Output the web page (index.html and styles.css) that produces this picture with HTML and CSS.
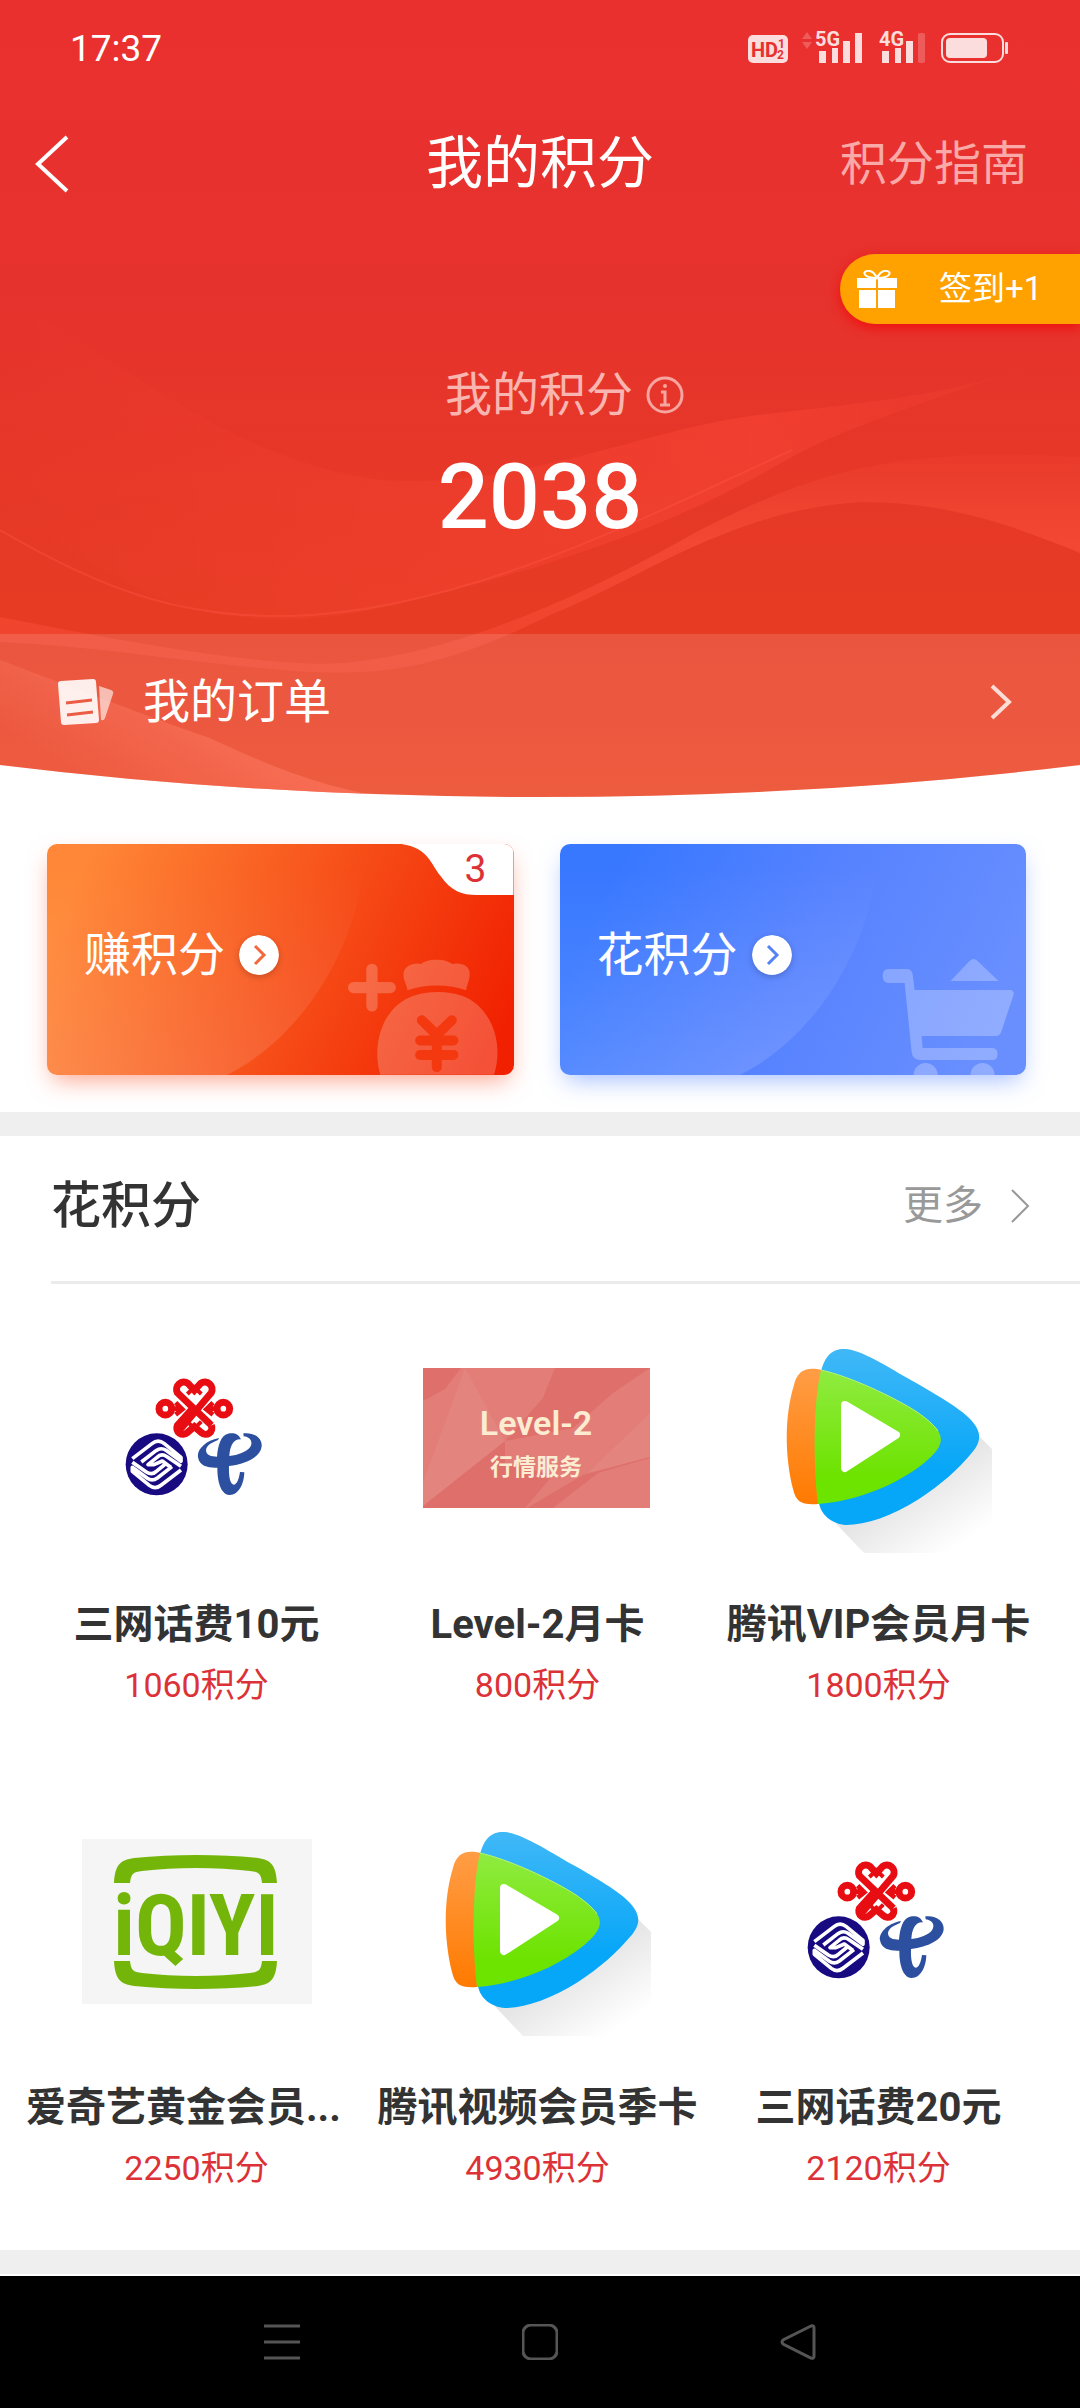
FILE: index.html
```html
<!DOCTYPE html>
<html lang="zh-CN">
<head>
    <meta charset="UTF-8">
    <meta name="viewport" content="width=device-width, initial-scale=1.0">
    <title>我的积分</title>
    <link rel="stylesheet" href="styles.css">
</head>
<body>
    <!-- логотипы, которые встречаются несколько раз -->
    <svg class="defs" aria-hidden="true">
        <defs>
            <linearGradient id="blue" x1="0" y1="0" x2="0" y2="1">
                <stop offset="0" stop-color="#40b8f7"/><stop offset="0.7" stop-color="#06a6f8"/>
            </linearGradient>
            <linearGradient id="orange" x1="0" y1="0" x2="0" y2="1">
                <stop offset="0" stop-color="#ff9d46"/><stop offset="1" stop-color="#ff7a00"/>
            </linearGradient>
            <linearGradient id="green" x1="0" y1="0" x2="0" y2="1">
                <stop offset="0" stop-color="#90eb40"/><stop offset="0.8" stop-color="#6de300"/>
            </linearGradient>
            <linearGradient id="shade" gradientUnits="userSpaceOnUse" x1="150" y1="165" x2="190" y2="225">
                <stop offset="0" stop-color="#e6e6e6"/><stop offset="1" stop-color="#fff"/>
            </linearGradient>
            <symbol id="carriers" viewBox="-54 -81 690 690">
                <g fill="none" stroke="#e70d12" stroke-width="21">
                    <path d="M232 248L334 128A22 22 0 0 0 302 100L283 121L264 100A22 22 0 0 0 232 128L334 226"/>
                    <path d="M334 226A19 19 0 0 1 304 248L283 230L262 248A19 19 0 0 1 232 226L283 170"/>
                    <path d="M262 132L283 112L304 132M262 215L283 235L304 215" stroke-width="12"/>
                    <circle cx="196" cy="176" r="19"/>
                    <circle cx="370" cy="176" r="19"/>
                    <path d="M213 176H240M227 158L247 178L227 194M353 176H326M339 158L319 178L339 194" stroke-width="14"/>
                </g>
                <circle cx="170" cy="343" r="93" fill="#180a80"/>
                <g fill="none" stroke="#fff" stroke-width="11" stroke-linejoin="round">
                    <path d="M97 326L156 281Q174 266 192 280L243 322V334L198 301Q183 291 168 302L124 336M243 349L201 320Q184 309 171 322L144 344H162L187 333L212 352"/>
                    <path d="M243 360L184 405Q166 420 148 406L97 364V352L142 385Q157 395 172 384L216 350M97 337L139 366Q156 377 169 364L196 342"/>
                </g>
                <path fill="#2c4f9f" d="M357 264C315 272 290 300 294 322C299 350 326 354 352 353C352 395 362 432 388 435C414 436 432 405 433 367L420 366C417 386 411 404 401 404C389 402 386 374 387 348C438 342 482 321 485 289C487 264 462 246 430 250L431 259C452 262 460 276 450 292C439 306 414 316 388 318C390 288 400 266 423 268C416 252 402 247 384 251C362 256 354 286 351 320C334 320 318 316 318 300C320 285 336 278 354 270Z"/>
            </symbol>
            <symbol id="tencent" viewBox="0 0 230 230">
                <path fill="url(#shade)" d="M214 112L228 126V230H100L62 190Z"/>
                <path fill="url(#blue)" d="M57 49C61 31 70 25 82 26C101 28 128 47 154 61C180 76 196 86 205 95C219 109 218 119 206 132C195 145 177 162 155 176C128 193 102 202 82 202C68 201 57 192 55 180Z"/>
                <path fill="url(#orange)" d="M58 47C42 43 33 48 30 62C20 94 21 134 29 166C32 180 39 182 54 181Z"/>
                <path fill="url(#green)" d="M57 47C85 53 130 74 153 89C184 110 183 121 160 140C134 161 94 178 54 181C50 153 48 84 57 47Z"/>
                <path fill="none" stroke="#b5f47c" d="M57 47C85 53 130 74 153 89C163 96 170 102 174 108"/>
                <path fill="#fff" stroke="#fff" stroke-width="8" stroke-linejoin="round" d="M81 82L132 112L81 145Z"/>
            </symbol>
        </defs>
    </svg>

    <header class="header">
        <svg class="header-bg" viewBox="0 0 1080 797" preserveAspectRatio="none" aria-hidden="true">
            <defs>
                <linearGradient id="bg" x1="0" y1="0" x2="0" y2="1">
                    <stop offset="0" stop-color="#ea302f"/><stop offset="0.36" stop-color="#e6322d"/>
                    <stop offset="0.8" stop-color="#e73c23"/><stop offset="1" stop-color="#ec4423"/>
                </linearGradient>
                <linearGradient id="rib" x1="0" y1="0" x2="0" y2="1">
                    <stop offset="0" stop-color="#ff5540" stop-opacity="0.1"/><stop offset="0.4" stop-color="#ff5540" stop-opacity="0.5"/>
                    <stop offset="1" stop-color="#ff5540" stop-opacity="0.3"/>
                </linearGradient>
                <linearGradient id="fade" x1="0" y1="0" x2="1" y2="0">
                    <stop offset="0" stop-color="#ff4a3a" stop-opacity="0"/><stop offset="0.7" stop-color="#ff4a3a" stop-opacity="0.4"/>
                    <stop offset="1" stop-color="#ff4a3a" stop-opacity="0"/>
                </linearGradient>
                <linearGradient id="glow" gradientUnits="userSpaceOnUse" x1="110" y1="790" x2="160" y2="700">
                    <stop offset="0" stop-color="#ff6a50" stop-opacity="0"/><stop offset="1" stop-color="#ff6a50" stop-opacity="0.5"/>
                </linearGradient>
                <clipPath id="bowl"><path d="M0 0H1080V765Q820 797 540 797Q260 797 0 765Z"/></clipPath>
            </defs>
            <g clip-path="url(#bowl)">
                <path fill="url(#bg)" d="M0 0H1080V797H0Z"/>
                <path fill="url(#fade)" d="M0 290C120 360 230 460 380 480C520 490 640 430 757 415C850 404 960 398 1080 350C960 390 850 425 792 457C700 510 600 555 413 600C230 650 130 600 0 500Z"/>
                <path fill="none" stroke="#ff5a48" stroke-opacity="0.35" stroke-width="2" d="M0 530C103 590 180 618 289 616C460 612 640 520 792 450"/>
                <path fill="url(#rib)" d="M0 617C130 643 270 668 344 663C480 650 620 575 700 530C800 480 880 445 1080 457V553C1000 520 940 502 861 502C730 510 640 580 550 615C450 665 390 676 310 672C200 665 100 646 0 642Z"/>
                <path fill="url(#glow)" d="M0 660C80 690 170 725 207 737C270 765 300 780 380 797H0Z"/>
                <path fill="#fff" fill-opacity="0.13" d="M0 634H1080V797H0Z"/>
            </g>
        </svg>

        <div class="status">
            <span>17:37</span>
            <svg class="status-icons" viewBox="0 0 264 40" aria-hidden="true">
                <g fill="#fbdddd">
                    <rect x="0" y="7" width="40" height="28" rx="5"/>
                    <g opacity="0.25"><path d="M54 11L59 4L64 11ZM54 14L59 21L64 14Z"/><rect x="170" y="5" width="7" height="30" rx="2"/></g>
                    <path d="M71 23h7v12h-7zM84 20h6v15h-6zM95 13h7v22h-7zM107 5h7v30h-7zM134 23h7v12h-7zM147 20h6v15h-6zM158 13h7v22h-7z"/>
                    <rect x="198" y="10" width="41" height="20" rx="4"/>
                    <rect x="257" y="14" width="3" height="12" rx="1"/>
                    <text x="67" y="18" font-size="20">5G</text>
                    <text x="131" y="18" font-size="20">4G</text>
                </g>
                <rect x="194" y="6" width="61" height="28" rx="8" fill="none" stroke="#fbdddd" stroke-width="2"/>
                <g fill="#e7312f">
                    <text x="3" y="29" font-size="20">HD</text>
                    <text x="30" y="20" font-size="12">1</text>
                    <text x="29" y="31" font-size="12">2</text>
                </g>
            </svg>
        </div>

        <nav class="nav">
            <button class="back" aria-label="返回">
                <svg viewBox="0 0 34 58"><path d="M32 2L3 29L32 56" fill="none" stroke="#fff" stroke-width="4"/></svg>
            </button>
            <h1>我的积分</h1>
            <a class="guide" href="#">积分指南</a>
        </nav>

        <button class="sign">
            <svg viewBox="0 0 42 38" aria-hidden="true">
                <path d="M1 8h19v10H1zM22 8h19v10H22zM3 20h17v18H3zM22 20h17v18H22z" fill="#fff"/>
                <path d="M20 8C8 8 6 2 11 1S19 4 21 8C23 4 26 0 31 1S34 8 22 8" fill="none" stroke="#fff" stroke-width="2"/>
            </svg>
            <span>签到+1</span>
        </button>

        <div class="label">
            <span>我的积分</span>
            <svg viewBox="0 0 40 40" aria-hidden="true">
                <g fill="none" stroke="#f6a59f" stroke-width="3">
                    <circle cx="20" cy="20" r="17"/>
                    <path d="M16 17H20V30M15 30H25" />
                </g>
                <circle cx="20" cy="11" r="2" fill="#f6a59f"/>
            </svg>
        </div>
        <div class="total">2038</div>

        <a class="orders" href="#">
            <svg class="orders-icon" viewBox="0 0 58 48" aria-hidden="true">
                <path d="M42 8L54 12Q57 13 56 16L48 40Q47 43 44 42Z" fill="#fff" fill-opacity="0.6"/>
                <path d="M4 3L36 1Q39 1 39 4L42 42Q42 45 39 45L7 47Q4 47 4 44L1 6Q1 3 4 3Z" fill="#fff" fill-opacity="0.9"/>
                <path d="M9 25L35 22M10 37L36 34" stroke="#ea5c44" stroke-width="3"/>
            </svg>
            <span>我的订单</span>
            <svg class="orders-arrow" viewBox="0 0 22 36" aria-hidden="true"><path d="M2 2L19 18L2 34" fill="none" stroke="#fbdcd6" stroke-width="4"/></svg>
        </a>
    </header>

    <section class="cards">
        <a class="card earn" href="#">
            <svg class="card-bg" viewBox="0 0 467 231" preserveAspectRatio="none" aria-hidden="true">
                <defs>
                    <linearGradient id="arc" x1="0" y1="0" x2="0" y2="1">
                        <stop offset="0.1" stop-color="#fff" stop-opacity="0"/><stop offset="1" stop-color="#fff" stop-opacity="0.13"/>
                    </linearGradient>
                </defs>
                <path fill="url(#arc)" d="M0 0H318C318 90 262 190 180 231H0Z"/>
                <g transform="translate(293 96) scale(0.333)">
                    <g fill="#fff" fill-opacity="0.22">
                        <path d="M80 88a17 17 0 0 1 34 0v38h38a17 17 0 0 1 0 34h-38v38a17 17 0 0 1-34 0v-38h-38a17 17 0 0 1 0-34h38z"/>
                        <path d="M204 151C200 130 190 118 192 100C194 76 225 66 244 72C264 55 318 55 338 72C366 66 392 78 391 102C391 120 383 132 380 151C330 132 254 132 204 151Z"/>
                        <path d="M122 405C95 310 130 200 220 168C265 152 325 152 370 168C455 200 495 310 464 405Z"/>
                    </g>
                    <path d="M247 241L292 285L337 241M292 285V382M242 302H342M242 345H342" fill="none" stroke="#f4380f" stroke-width="30" stroke-linecap="round"/>
                </g>
                <path fill="#fff" d="M355 0C382 4 384 20 394 32C404 47 416 51 430 51H467V0Z"/>
            </svg>
            <span>赚积分</span>
            <svg class="go" viewBox="0 0 40 40" aria-hidden="true"><circle cx="20" cy="20" r="20" fill="#fff"/><path d="M16 11L25 20L16 29" fill="none" stroke="#f0683c" stroke-width="3"/></svg>
            <em class="count">3</em>
        </a>
        <a class="card spend" href="#">
            <svg class="card-bg" viewBox="0 0 467 231" preserveAspectRatio="none" aria-hidden="true">
                <path fill="url(#arc)" d="M0 0H318C318 90 262 190 180 231H0Z"/>
                <g fill="#fff" fill-opacity="0.26">
                    <path d="M329 125H347Q352 125 353 130L355 146H450Q455 146 454 151L442 187Q441 192 436 192H362L363 204H433Q438 204 438 210T433 216H361Q353 216 352 208L345 139H329Q323 139 323 132T329 125Z"/>
                    <path d="M391 137L410 117Q414 113 418 117L439 137Z"/>
                    <path d="M354 231A12 12 0 0 1 378 231ZM411 231A12 12 0 0 1 435 231Z"/>
                </g>
            </svg>
            <span>花积分</span>
            <svg class="go" viewBox="0 0 40 40" aria-hidden="true"><circle cx="20" cy="20" r="20" fill="#fff"/><path d="M16 11L25 20L16 29" fill="none" stroke="#5583f5" stroke-width="3"/></svg>
        </a>
    </section>

    <section class="shop">
        <div class="shop-head">
            <h2>花积分</h2>
            <a class="more" href="#">更多
                <svg viewBox="0 0 20 34" aria-hidden="true"><path d="M2 1L18 17L2 33" fill="none" stroke="#999" stroke-width="2"/></svg>
            </a>
        </div>
        <div class="grid">
            <a class="item" href="#">
                <svg class="pic"><use href="#carriers"/></svg>
                <h3>三网话费10元</h3>
                <p>1060积分</p>
            </a>
            <a class="item" href="#">
                <svg class="pic" viewBox="0 0 230 230">
                    <path fill="#e27d78" d="M0 45H227V185H0Z"/>
                    <path fill="#dc5f5c" fill-opacity="0.45" d="M0 45H38L22 66L0 78ZM0 183L82 118V140L130 152L102 185H0ZM227 134L160 152L104 185H130L175 150L227 135ZM160 45H132L120 75L82 118L150 105L190 70L227 45Z"/>
                    <path fill="#fff" fill-opacity="0.06" d="M42 45L0 160V183L82 118ZM227 90L165 150L227 134Z"/>
                    <g fill="#fbecd2" text-anchor="middle">
                        <text x="113" y="112" font-size="34" font-weight="600">Level-2</text>
                        <text x="113" y="152" font-size="23" font-weight="600">行情服务</text>
                    </g>
                </svg>
                <h3>Level-2月卡</h3>
                <p>800积分</p>
            </a>
            <a class="item" href="#">
                <svg class="pic"><use href="#tencent"/></svg>
                <h3>腾讯VIP会员月卡</h3>
                <p>1800积分</p>
            </a>
            <a class="item" href="#">
                <svg class="pic" viewBox="0 0 230 230">
                    <path fill="#f5f5f5" d="M0 33H230V198H0Z"/>
                    <path fill="#74b509" d="M32 77C33 59 38 54 52 52C92 48 138 48 176 52C189 54 194 59 195 77H180C179 68 177 66 168 65C134 61 94 61 60 65C51 66 49 68 48 77ZM32 155C33 173 38 178 52 180C92 184 138 184 176 180C189 178 194 173 195 155H180C179 164 177 166 168 167C134 171 94 171 60 167C51 166 49 164 48 155Z"/>
                    <text class="iqiyi" x="114" y="149" text-anchor="middle">iQIYI</text>
                </svg>
                <h3 class="long">爱奇艺黄金会员...</h3>
                <p>2250积分</p>
            </a>
            <a class="item" href="#">
                <svg class="pic"><use href="#tencent"/></svg>
                <h3>腾讯视频会员季卡</h3>
                <p>4930积分</p>
            </a>
            <a class="item" href="#">
                <svg class="pic"><use href="#carriers"/></svg>
                <h3>三网话费20元</h3>
                <p>2120积分</p>
            </a>
        </div>
    </section>

    <footer class="sysbar">
        <button aria-label="菜单"><svg viewBox="0 0 36 36"><path d="M0 2H36M0 18H36M0 34H36" fill="none" stroke="#555" stroke-width="3"/></svg></button>
        <button aria-label="主页"><svg viewBox="0 0 36 36"><rect x="1" y="1" width="34" height="34" rx="8" fill="none" stroke="#555" stroke-width="3"/></svg></button>
        <button aria-label="返回"><svg viewBox="0 0 36 36"><path d="M31 2L3 16Q1 18 3 20L31 34Q34 35 34 32V4Q34 1 31 2Z" fill="none" stroke="#555" stroke-width="3"/></svg></button>
    </footer>
</body>
</html>
```
FILE: styles.css
```css
*{
    box-sizing: border-box;
    margin: 0;
    padding: 0;
}
body{
    min-height: 100vh;
    display: flex;
    flex-direction: column;
    background-color: white;
    color: #333;
    font-family: Roboto, "Noto Sans CJK SC", sans-serif;
}
a{
    color: inherit;
    text-decoration: none;
}
button{
    border: none;
    background: none;
    font: inherit;
    color: inherit;
}
svg{
    display: block;
    flex: none;
}
.defs{
    position: absolute;
    width: 0;
    height: 0;
}

/* шапка */
.header{
    position: relative;
    display: flex;
    flex-direction: column;
    color: white;
}
.header-bg{
    position: absolute;
    top: 0;
    left: 0;
    width: 100%;
    height: 100%;
    z-index: -1;
}
.status{
    display: flex;
    justify-content: space-between;
    align-items: center;
    height: 96px;
    padding: 0 68px 0 70px;
    font-size: 37px;
}
.status-icons{
    width: 264px;
    height: 40px;
    font-weight: bold;
}
.nav{
    display: grid;
    grid-template-columns: 1fr auto 1fr;
    align-items: center;
    height: 132px;
    padding: 4px 52px 0 35px;
}
.nav h1{
    font-size: 57px;
    font-weight: normal;
    line-height: 80px;
    margin-left: 17px;
}
.back svg{
    width: 34px;
    height: 58px;
}
.back{
    justify-self: start;
}
.guide{
    justify-self: end;
    font-size: 47px;
    line-height: 60px;
    color: #f8a9a8;
}
.sign{
    align-self: flex-end;
    display: flex;
    align-items: center;
    gap: 41px;
    width: 240px;
    height: 70px;
    margin-top: 26px;
    padding-left: 16px;
    border-radius: 35px 0 0 35px;
    background-color: #ffa200;
    box-shadow: 0 4px 12px #f01010;
    font-size: 33px;
    line-height: 40px;
    white-space: nowrap;
}
.sign svg{
    width: 42px;
    height: 38px;
}
.label{
    display: flex;
    justify-content: center;
    align-items: center;
    gap: 12px;
    margin-top: 41px;
    padding-left: 50px;
    line-height: 60px;
    font-size: 47px;
    color: #f9b5b0;
}
.label svg{
    width: 40px;
    height: 40px;
}
.total{
    margin-top: 23px;
    font-size: 90px;
    font-weight: 500;
    line-height: 100px;
    text-align: center;
}
.orders{
    display: flex;
    align-items: center;
    margin-top: 86px;
    padding: 0 68px 27px 57px;
    font-size: 47px;
    line-height: 136px;
}
.orders-icon{
    width: 58px;
    height: 48px;
    margin-right: 28px;
}
.orders-arrow{
    width: 22px;
    height: 36px;
    margin-left: auto;
}

/* две карточки */
.cards{
    display: flex;
    gap: 46px;
    padding: 47px 54px 37px 47px;
    border-bottom: 24px solid #efefef;
}
.card{
    position: relative;
    flex: 1;
    display: flex;
    align-items: center;
    gap: 14px;
    height: 231px;
    padding: 0 0 9px 37px;
    border-radius: 10px;
    color: white;
    font-size: 47px;
    line-height: 60px;
    z-index: 0;
}
.card-bg{
    position: absolute;
    top: 0;
    left: 0;
    width: 100%;
    height: 100%;
    border-radius: 10px;
    z-index: -1;
}
.earn{
    background: linear-gradient(115deg, #ff8737 8%, #f64a16 58%, #f12000 95%);
    box-shadow: 0 10px 24px -6px rgba(250, 80, 40, 0.55);
}
.spend{
    background: linear-gradient(115deg, #3878ff 12%, #5682ff 50%, #698fff 90%);
    box-shadow: 0 10px 24px -6px rgba(80, 130, 255, 0.55);
}
.go{
    width: 40px;
    height: 40px;
    border-radius: 50%;
    box-shadow: 0 2px 6px rgba(0, 0, 0, 0.2);
}
.count{
    position: absolute;
    top: 0;
    right: 0;
    width: 76px;
    font-size: 39px;
    font-style: normal;
    line-height: 51px;
    text-align: center;
    color: #dc3237;
}

/* товары */
.shop{
    border-bottom: 24px solid #efefef;
}
.shop-head{
    display: flex;
    justify-content: space-between;
    align-items: center;
    height: 148px;
    margin-left: 51px;
    padding: 0 50px 6px 0;
    line-height: 60px;
    border-bottom: 3px solid #ebebeb;
}
.shop-head h2{
    font-size: 50px;
    font-weight: 500;
}
.more{
    display: flex;
    align-items: center;
    gap: 27px;
    font-size: 40px;
    color: #999;
}
.more svg{
    width: 20px;
    height: 34px;
}
.grid{
    display: grid;
    grid-template-columns: repeat(3, minmax(0, 1fr));
    padding: 0 31px 0 26px;
}
.item{
    padding: 39px 0 50px;
    text-align: center;
}
.pic{
    width: 230px;
    height: 230px;
    margin: 0 auto 42px;
}
.iqiyi{
    font-family: "Roboto Condensed", "Liberation Sans Narrow", Roboto, sans-serif;
    font-size: 86px;
    font-weight: bold;
    fill: #74b509;
}
.item h3{
    font-size: 40px;
    font-weight: bold;
    line-height: 60px;
    white-space: nowrap;
}
.item .long{
    text-align: left;
}
.item p{
    font-size: 34px;
    line-height: 60px;
    padding-bottom: 2px;
    color: #dc3237;
}

/* системная панель */
.sysbar{
    display: flex;
    justify-content: center;
    align-items: center;
    gap: 222px;
    height: 132px;
    margin-top: auto;
    background-color: black;
}
.sysbar svg{
    width: 36px;
    height: 36px;
}
```
